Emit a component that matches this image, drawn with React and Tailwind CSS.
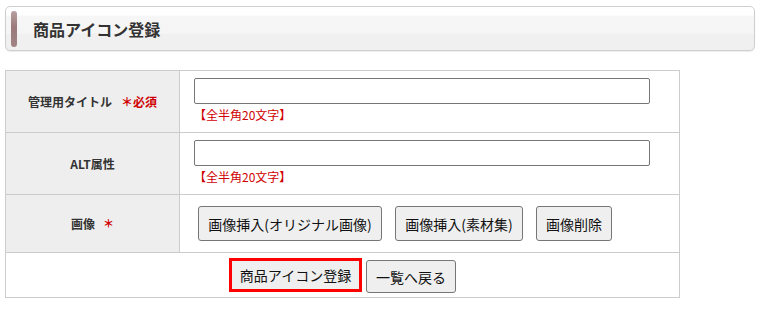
import React from 'react';

const font = { fontFamily: '"Noto Sans CJK JP", "Noto Sans", sans-serif' };

const Label = ({ children }) => (
  <div className="w-[174px] shrink-0 bg-[#eeeeee] border-r border-[#cccccc] flex items-center justify-center text-[12px] font-bold text-[#333333]">
    {children}
  </div>
);

const TextRow = ({ label }) => (
  <div className="flex h-[62px] border-b border-[#cccccc]">
    <Label>{label}</Label>
    <div className="pl-[14px] pt-[7px]">
      <input
        type="text"
        className="block w-[456px] h-[26px] border border-[#767676] rounded-[2px] bg-white outline-none"
      />
      <p className="mt-[2px] text-[12px] leading-[18px] text-[#d00000]">【全半角20文字】</p>
    </div>
  </div>
);

const GrayButton = ({ className, children }) => (
  <button
    className={`border border-[#767676] rounded-[3px] bg-[#efefef] text-[14px] text-[#111111] leading-none ${className}`}
  >
    {children}
  </button>
);

export default function App() {
  return (
    <div className="min-h-[311px] bg-white px-[5px] pt-[6px]" style={font}>
      <div className="w-[750px] h-[45px] rounded-[5px] border border-[#cfcfcf] bg-[linear-gradient(#ffffff_0%,#ffffff_18%,#f6f6f6_22%,#f5f5f5_60%,#f0f0f0_64%,#f0f0f0_100%)] flex items-center pl-[5px] shadow-[0_1px_1px_rgba(0,0,0,0.08)]">
        <div className="w-[6px] h-[36px] rounded-full bg-[linear-gradient(#b8a0a0,#9a7a7a_45%,#a08484)]" />
        <h1 className="ml-[16px] text-[16px] font-bold text-[#333333]">商品アイコン登録</h1>
      </div>

      <div className="mt-[19px] w-[675px] border border-[#cccccc]">
        <TextRow
          label={
            <>
              管理用タイトル
              <span className="ml-[9px] text-[#d00000]">＊必須</span>
            </>
          }
        />
        <TextRow label="ALT属性" />

        <div className="flex h-[58px] border-b border-[#cccccc]">
          <Label>
            画像
            <span className="ml-[8px] text-[11px] text-[#d00000] font-bold">＊</span>
          </Label>
          <div className="flex items-center gap-[13px] pl-[18px]">
            <GrayButton className="w-[184px] h-[35px]">画像挿入(オリジナル画像)</GrayButton>
            <GrayButton className="w-[128px] h-[35px]">画像挿入(素材集)</GrayButton>
            <GrayButton className="w-[76px] h-[35px]">画像削除</GrayButton>
          </div>
        </div>

        <div className="flex h-[44px] items-center justify-center gap-[4px]">
          <button className="w-[133px] h-[34px] border-[3px] border-[#ff0000] bg-[#efefef] text-[14px] text-[#111111] leading-none">
            商品アイコン登録
          </button>
          <GrayButton className="w-[90px] h-[33px] mt-[3px]">一覧へ戻る</GrayButton>
        </div>
      </div>
    </div>
  );
}
